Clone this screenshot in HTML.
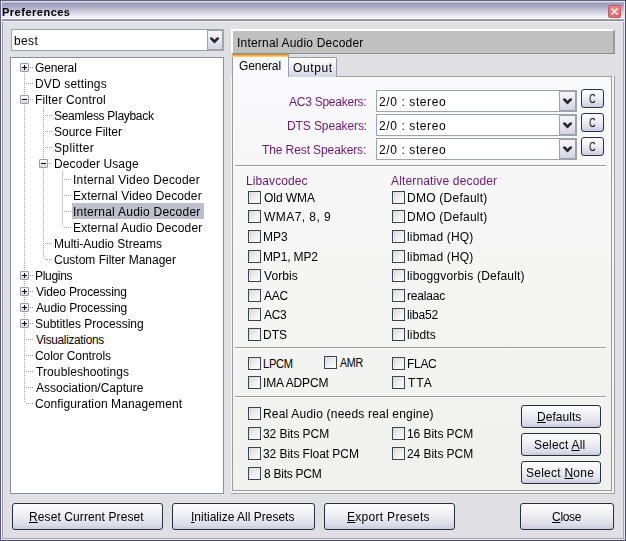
<!DOCTYPE html>
<html><head><meta charset="utf-8">
<style>
*{margin:0;padding:0;box-sizing:border-box}
html,body{width:626px;height:541px;overflow:hidden;background:#e0dfe3}
body{position:relative;font-family:"Liberation Sans",sans-serif;font-size:11px;color:#000}
.a{position:absolute}
.t{position:absolute;white-space:nowrap;line-height:16px;font-size:12px;will-change:transform}
#frame{left:0;top:0;width:626px;height:541px;border:1px solid #60607c;border-right-color:#4c4c64;border-bottom-color:#4c4c64;box-shadow:inset 1px 1px 0 #e8e8f6,inset -1px -1px 0 #e8e8f6}
#frame2{left:2px;top:19px;width:622px;height:520px;border:1px solid #a4a4b0;border-top:1px solid #b0b0bc;border-top-width:1px}
#title{left:2px;top:1px;width:622px;height:18px;background:linear-gradient(#dcdcec 0,#dcdcec 1px,#9898b6 2px,#a4a4c0 5px,#c8c8da 10px,#ececf2 15px,#f6f6f8 18px)}
#titletxt{left:3px;top:5px;font-weight:bold;font-size:11px;letter-spacing:0.7px;line-height:14px}
#tsep{left:2px;top:19px;width:622px;height:3px;background:#f2f2f8;border-top:1px solid #a8a8b4;box-shadow:inset 0 1px 0 #8c8c98}
#closeb{left:608px;top:5px;width:13px;height:13px;background:linear-gradient(#ec8484,#e26a6a);border:1px solid #c45a5a;border-radius:2px}
.combo{position:absolute;background:#fff;border:1px solid #9ca4ae}
.drop{position:absolute;width:17px;top:-1px;bottom:-1px;right:-1px;background:linear-gradient(#f6f6fa,#e6e6ee 50%,#d4d4e2);border:2px solid #9ca4ae;border-left-width:1px}
.drop svg{position:absolute;left:2px;top:6px}
#tree{left:10px;top:57px;width:214px;height:437px;background:#fff;border:1px solid #8a8fa0}
.exp{position:absolute;width:9px;height:9px;border:1px solid #9c9ca4;border-radius:1px;background:linear-gradient(#ffffff,#d8d8d8);}
.exp:before{content:"";position:absolute;left:1px;top:3px;width:5px;height:1px;background:#000}
.exp.p:after{content:"";position:absolute;left:3px;top:1px;width:1px;height:5px;background:#000}
.vl{position:absolute;width:1px;background:repeating-linear-gradient(#a0a0a0 0 1px,transparent 1px 2px)}
.hl{position:absolute;height:1px;background:repeating-linear-gradient(90deg,#a0a0a0 0 1px,transparent 1px 2px)}
#hdr{left:231px;top:29px;width:384px;height:25px;background:#c0c0c0;border-top:2px solid #fff;border-left:2px solid #fff;border-right:2px solid #999;border-bottom:1px solid #8c8c8c}
#tabpanel{left:232px;top:76px;width:380px;height:415px;border:1px solid #9c9c9c;background:linear-gradient(#f9f9fb,#f5f5f4 50%,#f0f0ec)}
.tab{position:absolute;border:1px solid #9c9ca8;border-bottom:none;border-radius:2px 2px 0 0}
.lbl{color:#681870}
.cb{position:absolute;width:13px;height:13px;border:1px solid #3c4450;background:linear-gradient(135deg,#d8d8dc,#f2f2f4 60%,#fcfcfc)}
.sep{position:absolute;height:2px;border-top:1px solid #9c9c98;border-bottom:1px solid #fff}
.btn{position:absolute;border:1px solid #243042;border-radius:3px;background:linear-gradient(#ffffff 0,#f4f4f8 30%,#dcdce8 85%,#c8c8dc 100%);text-align:center;line-height:25px;white-space:nowrap;letter-spacing:0.6px}
.cbtn{position:absolute;width:23px;height:19px;border:1px solid #283446;border-radius:3px;background:linear-gradient(#ffffff,#e8e8f0 60%,#c8cce0)}
</style></head><body>
<div class="a" id="frame"></div>
<div class="a" id="title"></div>
<div class="a" id="frame2"></div>
<div class="a" id="tsep"></div>
<div class="t" style="left:2.0px;top:4px;letter-spacing:0.5px;font-size:11px;font-weight:bold;">Preferences</div>
<div class="a" id="closeb"><svg width="11" height="11" style="position:absolute;left:0;top:0"><path d="M2.5 2.5L8.5 8.5M8.5 2.5L2.5 8.5" stroke="#fff4f4" stroke-width="1.7"/></svg></div>
<div class="combo" style="left:11px;top:29px;width:213px;height:22px"><div class="drop" style="width:17px"><svg width="9" height="7" style="left:2px"><path d="M0 0.5H2.2L4.5 2.8L6.8 0.5H9V2L4.5 6.5L0 2Z" fill="#26262e"/></svg></div></div>
<div class="t" style="left:14.0px;top:33px;letter-spacing:0.35px;">best</div>
<div class="a" id="tree"></div>
<div class="a" style="left:72px;top:203px;width:132px;height:16px;background:#bfbfcb"></div>
<div class="vl" style="left:24px;top:67px;height:336px"></div>
<div class="vl" style="left:43px;top:107px;height:152px"></div>
<div class="vl" style="left:62px;top:171px;height:56px"></div>
<div class="hl" style="left:26px;top:67px;width:8px"></div>
<div class="hl" style="left:26px;top:83px;width:8px"></div>
<div class="hl" style="left:26px;top:99px;width:8px"></div>
<div class="hl" style="left:45px;top:115px;width:8px"></div>
<div class="hl" style="left:45px;top:131px;width:8px"></div>
<div class="hl" style="left:45px;top:147px;width:8px"></div>
<div class="hl" style="left:45px;top:163px;width:8px"></div>
<div class="hl" style="left:64px;top:179px;width:8px"></div>
<div class="hl" style="left:64px;top:195px;width:8px"></div>
<div class="hl" style="left:64px;top:211px;width:8px"></div>
<div class="hl" style="left:64px;top:227px;width:8px"></div>
<div class="hl" style="left:45px;top:243px;width:8px"></div>
<div class="hl" style="left:45px;top:259px;width:8px"></div>
<div class="hl" style="left:26px;top:275px;width:8px"></div>
<div class="hl" style="left:26px;top:291px;width:8px"></div>
<div class="hl" style="left:26px;top:307px;width:8px"></div>
<div class="hl" style="left:26px;top:323px;width:8px"></div>
<div class="hl" style="left:26px;top:339px;width:8px"></div>
<div class="hl" style="left:26px;top:355px;width:8px"></div>
<div class="hl" style="left:26px;top:371px;width:8px"></div>
<div class="hl" style="left:26px;top:387px;width:8px"></div>
<div class="hl" style="left:26px;top:403px;width:8px"></div>
<div class="exp p" style="left:20px;top:63px"></div>
<div class="t" style="left:35.0px;top:60px;letter-spacing:-0.15px;">General</div>
<div class="t" style="left:35.0px;top:76px;letter-spacing:0.15px;">DVD settings</div>
<div class="exp" style="left:20px;top:95px"></div>
<div class="t" style="left:35.0px;top:92px;letter-spacing:0.15px;">Filter Control</div>
<div class="t" style="left:54.0px;top:108px;letter-spacing:-0.3px;">Seamless Playback</div>
<div class="t" style="left:54.0px;top:124px;letter-spacing:0.0px;">Source Filter</div>
<div class="t" style="left:54.0px;top:140px;letter-spacing:0.35px;">Splitter</div>
<div class="exp" style="left:39px;top:159px"></div>
<div class="t" style="left:54.0px;top:156px;letter-spacing:0.1px;">Decoder Usage</div>
<div class="t" style="left:73.0px;top:172px;letter-spacing:0.2px;">Internal Video Decoder</div>
<div class="t" style="left:73.0px;top:188px;letter-spacing:0.1px;">External Video Decoder</div>
<div class="t" style="left:73.0px;top:204px;letter-spacing:0.25px;">Internal Audio Decoder</div>
<div class="t" style="left:73.0px;top:220px;letter-spacing:0.15px;">External Audio Decoder</div>
<div class="t" style="left:54.0px;top:236px;letter-spacing:0.0px;">Multi-Audio Streams</div>
<div class="t" style="left:54.0px;top:252px;letter-spacing:0.0px;">Custom Filter Manager</div>
<div class="exp p" style="left:20px;top:271px"></div>
<div class="t" style="left:35.0px;top:268px;letter-spacing:-0.3px;">Plugins</div>
<div class="exp p" style="left:20px;top:287px"></div>
<div class="t" style="left:36.0px;top:284px;letter-spacing:-0.15px;">Video Processing</div>
<div class="exp p" style="left:20px;top:303px"></div>
<div class="t" style="left:36.0px;top:300px;letter-spacing:-0.15px;">Audio Processing</div>
<div class="exp p" style="left:20px;top:319px"></div>
<div class="t" style="left:35.0px;top:316px;letter-spacing:0.0px;">Subtitles Processing</div>
<div class="t" style="left:36.0px;top:332px;letter-spacing:-0.3px;transform:scaleX(0.983);transform-origin:0 0;will-change:auto;">Visualizations</div>
<div class="t" style="left:35.0px;top:348px;letter-spacing:-0.05px;">Color Controls</div>
<div class="t" style="left:36.0px;top:364px;letter-spacing:0.1px;">Troubleshootings</div>
<div class="t" style="left:36.0px;top:380px;letter-spacing:0.0px;">Association/Capture</div>
<div class="t" style="left:35.0px;top:396px;letter-spacing:0.1px;">Configuration Management</div>
<div class="a" id="hdr"></div>
<div class="t" style="left:237.0px;top:35px;letter-spacing:0.2px;">Internal Audio Decoder</div>
<div class="a" style="left:231px;top:76px;width:384px;height:418px;border-right:1px solid #a0a0a0;border-bottom:1px solid #a0a0a0;background:#f4f4f4"></div>
<div class="a" id="tabpanel"></div>
<div class="tab" style="left:288px;top:57px;width:49px;height:20px;background:linear-gradient(#ffffff,#f0f0f6 40%,#d4d4e6)"></div>
<div class="a" style="left:232px;top:54px;width:57px;height:23px;border-left:1px solid #9c9ca8;border-right:1px solid #9c9ca8;background:#fafafc"></div>
<div class="a" style="left:232px;top:54px;width:56px;height:3px;background:linear-gradient(#d8904c 0,#d8904c 1px,#eeb046 1px,#eeb046 2px,#fad060 2px)"></div>
<div class="t" style="left:239.0px;top:58px;letter-spacing:-0.1px;">General</div>
<div class="t" style="left:293.0px;top:60px;letter-spacing:0.6px;">Output</div>
<div class="t lbl" style="left:289.3px;top:94px;letter-spacing:-0.25px;">AC3 Speakers:</div>
<div class="combo" style="left:376px;top:90px;width:201px;height:22px"><div class="drop" style="width:18px"><svg width="9" height="7" style="left:3px"><path d="M0 0.5H2.2L4.5 2.8L6.8 0.5H9V2L4.5 6.5L0 2Z" fill="#26262e"/></svg></div></div>
<div class="t" style="left:379.0px;top:94px;letter-spacing:0.6px;">2/0 : stereo</div>
<div class="cbtn" style="left:581px;top:89px"></div>
<div class="t" style="left:589.0px;top:91px;letter-spacing:0px;transform:scaleX(0.78);transform-origin:0 0">C</div>
<div class="t lbl" style="left:286.7px;top:118px;letter-spacing:-0.1px;">DTS Speakers:</div>
<div class="combo" style="left:376px;top:114px;width:201px;height:22px"><div class="drop" style="width:18px"><svg width="9" height="7" style="left:3px"><path d="M0 0.5H2.2L4.5 2.8L6.8 0.5H9V2L4.5 6.5L0 2Z" fill="#26262e"/></svg></div></div>
<div class="t" style="left:379.0px;top:118px;letter-spacing:0.6px;">2/0 : stereo</div>
<div class="cbtn" style="left:581px;top:113px"></div>
<div class="t" style="left:589.0px;top:115px;letter-spacing:0px;transform:scaleX(0.78);transform-origin:0 0">C</div>
<div class="t lbl" style="left:262.1px;top:142px;letter-spacing:-0.1px;">The Rest Speakers:</div>
<div class="combo" style="left:376px;top:138px;width:201px;height:22px"><div class="drop" style="width:18px"><svg width="9" height="7" style="left:3px"><path d="M0 0.5H2.2L4.5 2.8L6.8 0.5H9V2L4.5 6.5L0 2Z" fill="#26262e"/></svg></div></div>
<div class="t" style="left:379.0px;top:142px;letter-spacing:0.6px;">2/0 : stereo</div>
<div class="cbtn" style="left:581px;top:137px"></div>
<div class="t" style="left:589.0px;top:139px;letter-spacing:0px;transform:scaleX(0.78);transform-origin:0 0">C</div>
<div class="sep" style="left:235px;top:165px;width:371px"></div>
<div class="t lbl" style="left:246.0px;top:173px;letter-spacing:0.1px;">Libavcodec</div>
<div class="t lbl" style="left:391.0px;top:173px;letter-spacing:0.15px;">Alternative decoder</div>
<div class="cb" style="left:248px;top:191px"></div>
<div class="t" style="left:263.5px;top:190px;letter-spacing:-0.05px;">Old WMA</div>
<div class="cb" style="left:392px;top:191px"></div>
<div class="t" style="left:406.5px;top:190px;letter-spacing:0.25px;">DMO (Default)</div>
<div class="cb" style="left:248px;top:210px"></div>
<div class="t" style="left:263.5px;top:209px;letter-spacing:0.45px;">WMA7, 8, 9</div>
<div class="cb" style="left:392px;top:210px"></div>
<div class="t" style="left:406.5px;top:209px;letter-spacing:0.25px;">DMO (Default)</div>
<div class="cb" style="left:248px;top:230px"></div>
<div class="t" style="left:262.5px;top:229px;letter-spacing:0.0px;">MP3</div>
<div class="cb" style="left:392px;top:230px"></div>
<div class="t" style="left:406.5px;top:229px;letter-spacing:0.15px;">libmad (HQ)</div>
<div class="cb" style="left:248px;top:250px"></div>
<div class="t" style="left:262.5px;top:249px;letter-spacing:-0.15px;">MP1, MP2</div>
<div class="cb" style="left:392px;top:250px"></div>
<div class="t" style="left:406.5px;top:249px;letter-spacing:0.15px;">libmad (HQ)</div>
<div class="cb" style="left:248px;top:269px"></div>
<div class="t" style="left:263.5px;top:268px;letter-spacing:0.1px;">Vorbis</div>
<div class="cb" style="left:392px;top:269px"></div>
<div class="t" style="left:406.5px;top:268px;letter-spacing:0.2px;">liboggvorbis (Default)</div>
<div class="cb" style="left:248px;top:289px"></div>
<div class="t" style="left:263.5px;top:288px;letter-spacing:-0.3px;">AAC</div>
<div class="cb" style="left:392px;top:289px"></div>
<div class="t" style="left:406.5px;top:288px;letter-spacing:-0.2px;">realaac</div>
<div class="cb" style="left:248px;top:308px"></div>
<div class="t" style="left:263.5px;top:307px;letter-spacing:-0.3px;">AC3</div>
<div class="cb" style="left:392px;top:308px"></div>
<div class="t" style="left:406.5px;top:307px;letter-spacing:-0.15px;">liba52</div>
<div class="cb" style="left:248px;top:328px"></div>
<div class="t" style="left:262.5px;top:327px;letter-spacing:0.0px;">DTS</div>
<div class="cb" style="left:392px;top:328px"></div>
<div class="t" style="left:406.5px;top:327px;letter-spacing:0.15px;">libdts</div>
<div class="sep" style="left:235px;top:347px;width:371px"></div>
<div class="cb" style="left:248px;top:357px"></div>
<div class="t" style="left:262.57px;top:356px;letter-spacing:-0.3px;transform:scaleX(0.926);transform-origin:0 0;will-change:auto;">LPCM</div>
<div class="cb" style="left:324px;top:356px"></div>
<div class="t" style="left:339.5px;top:355px;letter-spacing:-0.3px;transform:scaleX(0.892);transform-origin:0 0;will-change:auto;">AMR</div>
<div class="cb" style="left:392px;top:357px"></div>
<div class="t" style="left:406.5px;top:356px;letter-spacing:-0.3px;">FLAC</div>
<div class="cb" style="left:248px;top:376px"></div>
<div class="t" style="left:262.5px;top:375px;letter-spacing:-0.15px;">IMA ADPCM</div>
<div class="cb" style="left:392px;top:376px"></div>
<div class="t" style="left:407.5px;top:375px;letter-spacing:1.0px;">TTA</div>
<div class="sep" style="left:235px;top:396px;width:371px"></div>
<div class="cb" style="left:248px;top:407px"></div>
<div class="t" style="left:262.5px;top:406px;letter-spacing:0.2px;">Real Audio (needs real engine)</div>
<div class="cb" style="left:248px;top:427px"></div>
<div class="t" style="left:262.5px;top:426px;letter-spacing:-0.05px;">32 Bits PCM</div>
<div class="cb" style="left:392px;top:427px"></div>
<div class="t" style="left:406.5px;top:426px;letter-spacing:-0.05px;">16 Bits PCM</div>
<div class="cb" style="left:248px;top:447px"></div>
<div class="t" style="left:262.5px;top:446px;letter-spacing:-0.05px;">32 Bits Float PCM</div>
<div class="cb" style="left:392px;top:447px"></div>
<div class="t" style="left:406.5px;top:446px;letter-spacing:-0.05px;">24 Bits PCM</div>
<div class="cb" style="left:248px;top:467px"></div>
<div class="t" style="left:263.5px;top:466px;letter-spacing:-0.25px;">8 Bits PCM</div>
<div class="btn" style="left:521px;top:405px;width:80px;height:23px"></div>
<div class="t" style="left:536.8px;top:409px;letter-spacing:0.05px;"><u>D</u>efaults</div>
<div class="btn" style="left:521px;top:433px;width:80px;height:23px"></div>
<div class="t" style="left:533.6px;top:437px;letter-spacing:0.2px;">Select <u>A</u>ll</div>
<div class="btn" style="left:521px;top:461px;width:80px;height:23px"></div>
<div class="t" style="left:525.7px;top:465px;letter-spacing:0.25px;">Select <u>N</u>one</div>
<div class="btn" style="left:12px;top:503px;width:151px;height:27px"></div>
<div class="t" style="left:29.0px;top:509px;letter-spacing:0.1px;"><u>R</u>eset Current Preset</div>
<div class="btn" style="left:172px;top:503px;width:143px;height:27px"></div>
<div class="t" style="left:190.5px;top:509px;letter-spacing:0.0px;"><u>I</u>nitialize All Presets</div>
<div class="btn" style="left:324px;top:503px;width:131px;height:27px"></div>
<div class="t" style="left:347.0px;top:509px;letter-spacing:0.3px;"><u>E</u>xport Presets</div>
<div class="btn" style="left:520px;top:503px;width:94px;height:27px"></div>
<div class="t" style="left:552.0px;top:509px;letter-spacing:-0.3px;"><u>C</u>lose</div>
</body></html>
